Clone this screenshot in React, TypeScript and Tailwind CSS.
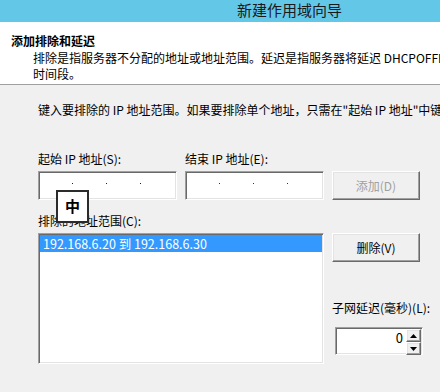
import React from "react";

const font = {
  fontFamily: '"Noto Sans CJK SC", "Noto Sans", sans-serif',
};

// sunken edit box (classic Windows 3D edge)
const sunken =
  "border border-t-[#a0a0a0] border-l-[#a0a0a0] border-r-white border-b-white shadow-[inset_1px_1px_0_#696969,inset_-1px_-1px_0_#e3e3e3] bg-white";

// raised push button
const raised =
  "border border-t-white border-l-white border-r-[#696969] border-b-[#696969] shadow-[inset_-1px_-1px_0_#a0a0a0,inset_1px_1px_0_#e3e3e3] bg-[#f0f0f0]";

function IpBox({ dotColor }: { dotColor: string }) {
  return (
    <div className={`${sunken} h-[29px] w-[139px] flex items-start pt-[11px] pl-[33px] gap-[33px]`}>
      <span className={`block w-px h-px ${dotColor}`} />
      <span className={`block w-px h-px ${dotColor}`} />
      <span className={`block w-px h-px ${dotColor}`} />
    </div>
  );
}

function Arrow({ up }: { up?: boolean }) {
  return (
    <div className={`${raised} h-[13px] w-[15px] flex items-center justify-center`}>
      <svg width="7" height="4" viewBox="0 0 7 4">
        {up ? (
          <polygon points="3.5,0 7,4 0,4" fill="#000" />
        ) : (
          <polygon points="0,0 7,0 3.5,4" fill="#000" />
        )}
      </svg>
    </div>
  );
}

export default function App() {
  return (
    <div
      className="relative w-[440px] h-[392px] overflow-hidden bg-[#f0f0f0] text-[12px] text-black whitespace-nowrap"
      style={font}
    >
      {/* title bar */}
      <div className="h-[22px] bg-[#63c7e8] pl-[237px] text-[15px] leading-[20px] text-[#1a1a1a]">
        新建作用域向导
      </div>

      {/* header */}
      <div className="h-[63px] bg-white border-b border-[#a0a0a0] pt-[11px] leading-[16px]">
        <div className="pl-[11px] font-bold">添加排除和延迟</div>
        <div className="pl-[33px] pt-[1px]">
          排除是指服务器不分配的地址或地址范围。延迟是指服务器将延迟 DHCPOFFER 消息传输的
        </div>
        <div className="pl-[33px]">时间段。</div>
      </div>

      {/* body */}
      <div className="pl-[38px] pt-[17px] leading-[16px]">
        <div>键入要排除的 IP 地址范围。如果要排除单个地址，只需在"起始 IP 地址"中键入地址。</div>

        <div className="mt-[33px] flex gap-[8px]">
          <div className="flex flex-col gap-[4px]">
            <div>起始 IP 地址(S):</div>
            <IpBox dotColor="bg-[#202020]" />
          </div>
          <div className="flex flex-col gap-[4px]">
            <div>结束 IP 地址(E):</div>
            <IpBox dotColor="bg-[#800080]" />
          </div>
          <div className="flex flex-col justify-end">
            <div className={`${raised} h-[29px] w-[88px] flex items-center justify-center text-[#a0a0a0]`}>
              添加(D)
            </div>
          </div>
        </div>

        <div className="mt-[13px]">排除的地址范围(C):</div>
        <div className="mt-[4px] flex gap-[8px]">
          <div className={`${sunken} h-[131px] w-[286px] p-[1px]`}>
            <div className="h-[17px] bg-[#3399ff] text-white pl-[3px] leading-[17px] text-[12.5px]">
              192.168.6.20 到 192.168.6.30
            </div>
          </div>
          <div className="flex flex-col">
            <div className={`${raised} h-[29px] w-[88px] flex items-center justify-center`}>
              删除(V)
            </div>
            <div className="mt-[38px]">子网延迟(毫秒)(L):</div>
            <div className={`${sunken} mt-[11px] ml-[3px] h-[28px] w-[88px] flex items-start justify-end pt-[1px] pr-[1px]`}>
              <div className="pr-[3px] leading-[13px] pt-[2px] text-[13px]">0</div>
              <div className="flex flex-col">
                <Arrow up />
                <Arrow />
              </div>
            </div>
          </div>
        </div>
      </div>

      {/* IME indicator overlay */}
      <div className="absolute left-[56px] top-[190px] w-[33px] h-[33px] border-2 border-[#2b2b2b] bg-white flex items-center justify-center text-[15px] font-bold">
        中
      </div>
    </div>
  );
}
